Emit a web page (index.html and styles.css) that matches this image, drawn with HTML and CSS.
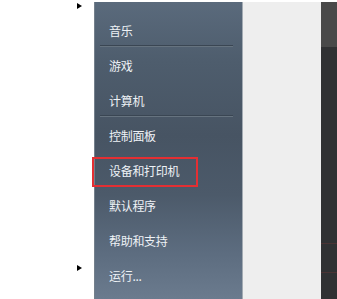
FILE: index.html
```html
<!DOCTYPE html>
<html lang="zh">
<head>
<meta charset="utf-8">
<link rel="stylesheet" href="styles.css">
</head>
<body>
<div class="screen">
  <div class="gutter">
    <span class="arrow arrow-top"></span>
    <span class="arrow arrow-bottom"></span>
  </div>
  <div class="menu">
    <div class="item">音乐</div>
    <div class="sep"></div>
    <div class="item">游戏</div>
    <div class="item">计算机</div>
    <div class="sep"></div>
    <div class="item">控制面板</div>
    <div class="item highlighted">设备和打印机<span class="mark"></span></div>
    <div class="item">默认程序</div>
    <div class="item">帮助和支持</div>
    <div class="item">运行...</div>
  </div>
  <div class="edge"></div>
  <div class="light"></div>
  <div class="dark">
    <div class="dark-top"></div>
    <div class="dark-rest"><span class="ghost"></span></div>
  </div>
</div>
</body>
</html>
```

FILE: styles.css
```css
html, body {
  margin: 0;
  padding: 0;
  background: #ffffff;
}
body {
  width: 337px;
  height: 299px;
  overflow: hidden;
  font-family: "Noto Sans CJK SC", "Microsoft YaHei", sans-serif;
}
.screen {
  display: flex;
  height: 297px;
  margin-top: 2px;
}
.gutter {
  width: 94px;
  flex: none;
  display: flex;
  flex-direction: column;
  align-items: flex-start;
  padding-left: 77px;
  box-sizing: border-box;
}
.arrow {
  width: 0;
  height: 0;
  border-top: 3px solid transparent;
  border-bottom: 3px solid transparent;
  border-left: 5px solid #000;
}
.arrow-top {
  margin-top: 1px;
}
.arrow-bottom {
  margin-top: auto;
  margin-bottom: 28px;
}
.menu {
  width: 148px;
  flex: none;
  box-sizing: border-box;
  padding-top: 11px;
  border-left: 1px solid #74808c;
  background: linear-gradient(to bottom, #5a6a7c 0%, #4e5d6d 20%, #475463 45%, #4c5a6a 65%, #5d6d80 85%, #6b7b8e 100%);
}
.item {
  position: relative;
  height: 35px;
  line-height: 35px;
  padding-left: 14px;
  font-size: 12px;
  color: #eef2f6;
  letter-spacing: -0.3px;
}
.sep {
  height: 1px;
  margin: -3px 9px 1px 5px;
  background: #3a4653;
  border-bottom: 1px solid #66737f;
}
.mark {
  position: absolute;
  left: -3px;
  top: 4px;
  width: 102px;
  height: 26px;
  border: 2px solid #e42f33;
}
.edge {
  width: 1px;
  flex: none;
  background: #a3abb3;
}
.light {
  width: 78px;
  flex: none;
  background: #eeeeee;
}
.dark {
  flex: 1;
  display: flex;
  flex-direction: column;
}
.dark-top {
  height: 45px;
  background: #494949;
}
.dark-rest {
  flex: 1;
  position: relative;
  background: #303133;
}
.ghost {
  position: absolute;
  left: 0;
  top: 196px;
  width: 16px;
  height: 28px;
  border-top: 1px solid #4a3334;
  border-bottom: 1px solid #4a3334;
}
```
